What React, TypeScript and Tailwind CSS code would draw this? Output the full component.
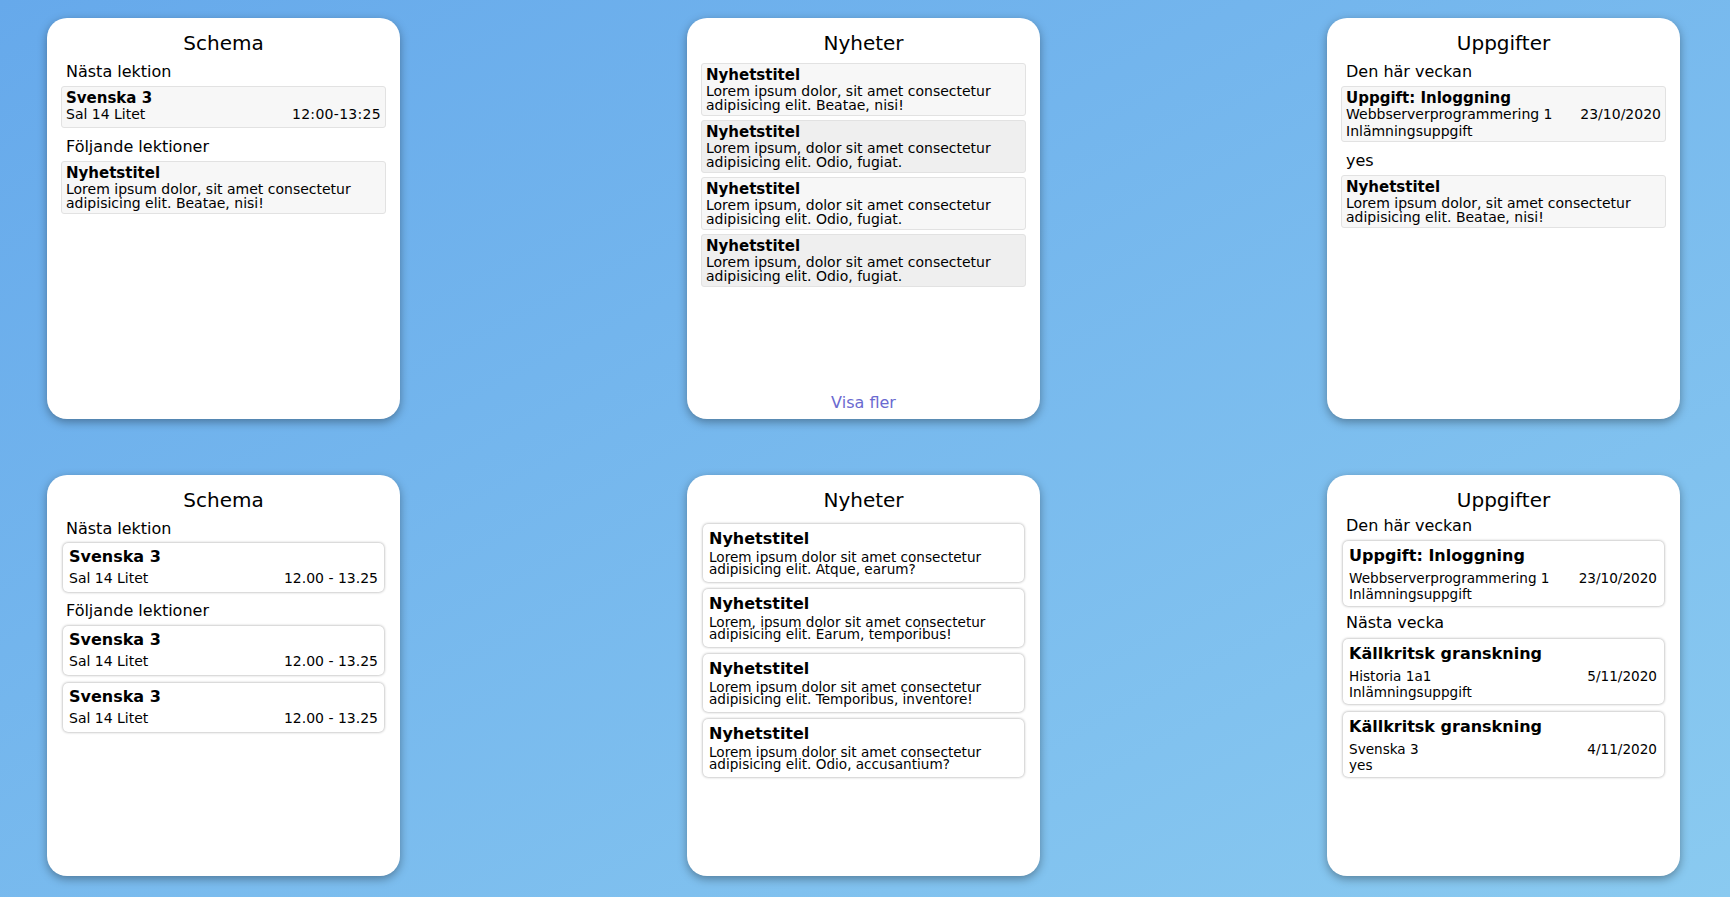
import React from "react"

const font = { fontFamily: '"DejaVu Sans", Verdana, sans-serif' }

function Card({ title, children, footer }: { title: string; children: React.ReactNode; footer?: React.ReactNode }) {
  return (
    <div className="flex h-[401px] w-[353px] flex-col rounded-[20px] bg-white px-[14px] pt-[13px] pb-[6px] shadow-[0_3px_10px_rgba(0,0,0,0.35)]">
      <h2 className="text-center text-[20px] leading-[24px] text-black">{title}</h2>
      <div className="flex-1">{children}</div>
      {footer}
    </div>
  )
}

function Label({ children, className = "" }: { children: React.ReactNode; className?: string }) {
  return <div className={`px-[5px] text-[16px] leading-[19px] text-black ${className}`}>{children}</div>
}

// top row: flat grey boxes
function OldLesson() {
  return (
    <div className="mt-[5px] rounded-[3px] border border-[#e2e2e2] bg-[#f7f7f7] px-[4px] pt-[3px] pb-[5px] text-[14px] leading-[16px] text-black">
      <div className="text-[15px] font-bold">Svenska 3</div>
      <div className="flex justify-between">
        <span>Sal 14 Litet</span>
        <span className="tracking-[0.3px]">12:00-13:25</span>
      </div>
    </div>
  )
}

function OldNews({ text, alt = false, className = "" }: { text: string; alt?: boolean; className?: string }) {
  return (
    <div className={`rounded-[3px] border border-[#e2e2e2] px-[4px] pt-[3px] pb-[3px] text-[14px] text-black ${alt ? "bg-[#efefef]" : "bg-[#f7f7f7]"} ${className}`}>
      <div className="text-[15px] leading-[16px] font-bold">Nyhetstitel</div>
      <div className="mt-[2px] leading-[13.5px]">{text}</div>
    </div>
  )
}

// bottom row: white boxes with shadow
function Lesson({ className = "" }: { className?: string }) {
  return (
    <div className={`mx-[2px] rounded-[5px] bg-white px-[6px] pt-[3px] pb-[3px] text-black shadow-[0_0_3px_rgba(0,0,0,0.4)] ${className}`}>
      <div className="text-[16px] leading-[22px] font-bold">Svenska 3</div>
      <div className="flex justify-between text-[14px] leading-[21px]">
        <span>Sal 14 Litet</span>
        <span>12.00 - 13.25</span>
      </div>
    </div>
  )
}

function News({ text }: { text: string }) {
  return (
    <div className="mx-[2px] rounded-[5px] bg-white px-[6px] pt-[4px] pb-[7px] text-black shadow-[0_0_3px_rgba(0,0,0,0.4)]">
      <div className="text-[16px] leading-[22px] font-bold">Nyhetstitel</div>
      <div className="mt-[0.5px] text-[13.6px] leading-[12.3px]">{text}</div>
    </div>
  )
}

function Task({ title, course, date, kind, className = "" }: { title: string; course: string; date: string; kind: string; className?: string }) {
  return (
    <div className={`mx-[2px] rounded-[5px] bg-white pt-[4px] pr-[7px] pb-[6px] pl-[6px] text-black shadow-[0_0_3px_rgba(0,0,0,0.4)] ${className}`}>
      <div className="text-[16px] leading-[22px] font-bold">{title}</div>
      <div className="flex justify-between text-[13.6px] leading-[22px]">
        <span>{course}</span>
        <span>{date}</span>
      </div>
      <div className="text-[13.6px] leading-[11px]">{kind}</div>
    </div>
  )
}

export default function App() {
  return (
    <div style={font} className="flex min-h-screen flex-col gap-[56px] bg-linear-to-br from-[#66a9eb] to-[#8acaf0] pt-[18px] pb-[22px]">
      <div className="flex justify-between pr-[50px] pl-[47px]">
        <Card title="Schema">
          <Label className="mt-[7px]">Nästa lektion</Label>
          <OldLesson />
          <Label className="mt-[9px]">Följande lektioner</Label>
          <OldNews className="mt-[5px]" text="Lorem ipsum dolor, sit amet consectetur adipisicing elit. Beatae, nisi!" />
        </Card>
        <Card
          title="Nyheter"
          footer={<div className="text-center text-[16px] leading-[20px] text-[#6a6ad0]">Visa fler</div>}
        >
          <div className="mt-[8px] flex flex-col gap-[4px]">
            <OldNews text="Lorem ipsum dolor, sit amet consectetur adipisicing elit. Beatae, nisi!" />
            <OldNews alt text="Lorem ipsum, dolor sit amet consectetur adipisicing elit. Odio, fugiat." />
            <OldNews text="Lorem ipsum, dolor sit amet consectetur adipisicing elit. Odio, fugiat." />
            <OldNews alt text="Lorem ipsum, dolor sit amet consectetur adipisicing elit. Odio, fugiat." />
          </div>
        </Card>
        <Card title="Uppgifter">
          <Label className="mt-[7px]">Den här veckan</Label>
          <div className="mt-[5px] rounded-[3px] border border-[#e2e2e2] bg-[#f7f7f7] px-[4px] pt-[3px] pb-[2px] text-[14px] text-black">
            <div className="text-[15px] leading-[16px] font-bold">Uppgift: Inloggning</div>
            <div className="flex justify-between leading-[16.5px]">
              <span>Webbserverprogrammering 1</span>
              <span>23/10/2020</span>
            </div>
            <div className="leading-[16.5px]">Inlämningsuppgift</div>
          </div>
          <Label className="mt-[9px]">yes</Label>
          <OldNews className="mt-[5px]" text="Lorem ipsum dolor, sit amet consectetur adipisicing elit. Beatae, nisi!" />
        </Card>
      </div>

      <div className="flex justify-between pr-[50px] pl-[47px]">
        <Card title="Schema">
          <Label className="mt-[7px]">Nästa lektion</Label>
          <Lesson className="mt-[5px]" />
          <Label className="mt-[9px]">Följande lektioner</Label>
          <div className="mt-[6px] flex flex-col gap-[8px]">
            <Lesson />
            <Lesson />
          </div>
        </Card>
        <Card title="Nyheter">
          <div className="mt-[12px] flex flex-col gap-[7px]">
            <News text="Lorem ipsum dolor sit amet consectetur adipisicing elit. Atque, earum?" />
            <News text="Lorem, ipsum dolor sit amet consectetur adipisicing elit. Earum, temporibus!" />
            <News text="Lorem ipsum dolor sit amet consectetur adipisicing elit. Temporibus, inventore!" />
            <News text="Lorem ipsum dolor sit amet consectetur adipisicing elit. Odio, accusantium?" />
          </div>
        </Card>
        <Card title="Uppgifter">
          <Label className="mt-[4px]">Den här veckan</Label>
          <Task className="mt-[6px]" title="Uppgift: Inloggning" course="Webbserverprogrammering 1" date="23/10/2020" kind="Inlämningsuppgift" />
          <Label className="mt-[7px]">Nästa vecka</Label>
          <div className="mt-[7px] flex flex-col gap-[8px]">
            <Task title="Källkritsk granskning" course="Historia 1a1" date="5/11/2020" kind="Inlämningsuppgift" />
            <Task title="Källkritsk granskning" course="Svenska 3" date="4/11/2020" kind="yes" />
          </div>
        </Card>
      </div>
    </div>
  )
}
